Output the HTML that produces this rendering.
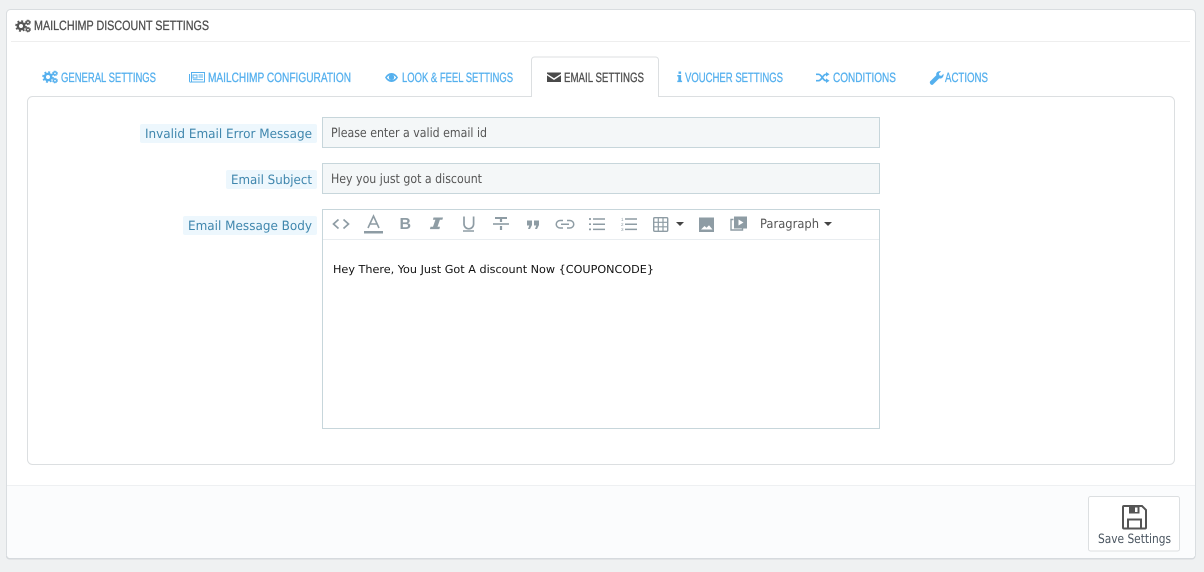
<!DOCTYPE html>
<html><head><meta charset="utf-8"><title>Mailchimp Discount Settings</title>
<style>
html,body{margin:0;padding:0;background:#eff1f2;width:1204px;height:572px;overflow:hidden}
svg{display:block;text-rendering:geometricPrecision}
.h{font-family:"Liberation Sans Narrow","Liberation Sans",sans-serif;font-size:13.5px;stroke-width:.3px}
.b{font-family:"DejaVu Sans",sans-serif;font-size:12.8px}
.tab{fill:#55b0ee;stroke:#55b0ee}
.dk{fill:#4f4f4f;stroke:#4f4f4f}
</style></head><body>
<svg width="1204" height="572" viewBox="0 0 1204 572" xmlns="http://www.w3.org/2000/svg">
<defs>
<g id="gears">
<circle cx="5" cy="6" r="3.2" fill="none" stroke="currentColor" stroke-width="2.4"/>
<circle cx="5" cy="6" r="5" fill="none" stroke="currentColor" stroke-width="1.6" stroke-dasharray="2 1.93"/>
<circle cx="12" cy="2.4" r="1.5" fill="none" stroke="currentColor" stroke-width="1.3"/>
<circle cx="12" cy="2.4" r="2.4" fill="none" stroke="currentColor" stroke-width=".8" stroke-dasharray="1.2 .7"/>
<circle cx="12" cy="9.6" r="1.5" fill="none" stroke="currentColor" stroke-width="1.3"/>
<circle cx="12" cy="9.6" r="2.4" fill="none" stroke="currentColor" stroke-width=".8" stroke-dasharray="1.2 .7"/>
</g>
</defs>
<!-- panel -->
<rect x="6.5" y="9.5" width="1189" height="549" rx="4" fill="#fff" stroke="#d9dde0"/>
<path d="M7 485.5H1195V555a3 3 0 0 1-3 3H10a3 3 0 0 1-3-3Z" fill="#fbfcfd"/>
<path d="M7 485.5H1195" stroke="#eef0f2"/>
<path d="M11 41.5H1190" stroke="#eeeeee"/>
<path d="M6.5 556a3 3 0 0 0 3 3H1192a3 3 0 0 0 3-3" fill="none" stroke="#d4d8db"/>
<!-- title -->
<use href="#gears" x="16" y="20" color="#555"/>
<text class="h dk" x="34" y="30" textLength="175" lengthAdjust="spacingAndGlyphs">MAILCHIMP DISCOUNT SETTINGS</text>
<!-- content box -->
<rect x="27.5" y="96.5" width="1147" height="368" rx="5" fill="#fff" stroke="#dcdfe1"/>
<!-- tabs -->
<path d="M531.5 97V60a3 3 0 0 1 3-3h121a3 3 0 0 1 3 3V97" fill="#fff" stroke="#dcdfe1"/>
<path d="M532 97H658" stroke="#fff" stroke-width="1.5"/>
<use href="#gears" x="43" y="71" color="#55b0ee"/>
<text class="h tab" x="61" y="82" textLength="95" lengthAdjust="spacingAndGlyphs">GENERAL SETTINGS</text>
<g fill="none" stroke="#55b0ee">
<rect x="191.5" y="72.5" width="13" height="9.5"/>
<path d="M189.5 74v7a1 1 0 0 0 1.500 1"/>
<path d="M193 75h4v3h-4zM198.500 75h4.500M198.500 77h4.500M193 79.700h10" stroke-width=".9"/>
</g>
<text class="h tab" x="208" y="82" textLength="143" lengthAdjust="spacingAndGlyphs">MAILCHIMP CONFIGURATION</text>
<path d="M385 77.500C388.500 71.500 394.500 71.500 398 77.500C394.500 83.500 388.500 83.500 385 77.500Z" fill="#55b0ee"/>
<path d="M386.800 77.500C389.500 74.200 393.500 74.200 396.200 77.500C393.500 80.800 389.500 80.800 386.800 77.500Z" fill="#fff"/>
<circle cx="391.500" cy="77.300" r="2.700" fill="#55b0ee"/>
<text class="h tab" x="402" y="82" textLength="111" lengthAdjust="spacingAndGlyphs">LOOK &amp; FEEL SETTINGS</text>
<path d="M547 72.500h14v1.200l-7 4.600-7-4.600zM547 75.400l7 4.600 7-4.600V82h-14z" fill="#4a4a4a"/>
<text class="h dk" x="564" y="82" textLength="80" lengthAdjust="spacingAndGlyphs">EMAIL SETTINGS</text>
<path d="M678.500 71.500h2.600v2.400h-2.600zM677.300 75h3.800v5.600h1v1.500h-4.800v-1.500h1v-4.100h-1z" fill="#55b0ee"/>
<text class="h tab" x="685" y="82" textLength="98" lengthAdjust="spacingAndGlyphs">VOUCHER SETTINGS</text>
<g fill="none" stroke="#55b0ee" stroke-width="1.700">
<path d="M816 74.300h2.500c3.500 0 4 6.400 7.500 6.400h1"/><path d="M816 80.700h2.500c3.500 0 4-6.400 7.500-6.400h1"/>
</g>
<path d="M826 72l3.500 2.300-3.500 2.300zM826 78.400l3.500 2.300-3.500 2.300z" fill="#55b0ee"/>
<text class="h tab" x="833" y="82" textLength="63" lengthAdjust="spacingAndGlyphs">CONDITIONS</text>
<path d="M930 81.500l6.300-6.300c-.6-2.500 1.500-4.600 4.800-4l-2.200 2.300.5 1.900 1.900.5 2.200-2.200c.5 3.300-1.700 5.300-4.300 4.700l-6.300 6.200c-1.400 1.200-3.800-1.200-2.900-3.100z" fill="#55b0ee"/>
<text class="h tab" x="945" y="82" textLength="43" lengthAdjust="spacingAndGlyphs">ACTIONS</text>
<!-- labels -->
<g fill="#edf7fd">
<rect x="140" y="124" width="177" height="19" rx="2"/>
<rect x="226" y="170" width="91" height="19" rx="2"/>
<rect x="183" y="216" width="134" height="19" rx="2"/>
</g>
<g class="b" fill="#3f86ad">
<text x="145" y="138" textLength="167" lengthAdjust="spacingAndGlyphs">Invalid Email Error Message</text>
<text x="231" y="184" textLength="81" lengthAdjust="spacingAndGlyphs">Email Subject</text>
<text x="188" y="230" textLength="124" lengthAdjust="spacingAndGlyphs">Email Message Body</text>
</g>
<!-- inputs -->
<rect x="322.500" y="117.500" width="557" height="30" fill="#f4f7f8" stroke="#c7d6db"/>
<rect x="322.500" y="163.500" width="557" height="30" fill="#f4f7f8" stroke="#c7d6db"/>
<g class="b" fill="#555">
<text x="331" y="137" textLength="156" lengthAdjust="spacingAndGlyphs">Please enter a valid email id</text>
<text x="331" y="183" textLength="151" lengthAdjust="spacingAndGlyphs">Hey you just got a discount</text>
</g>
<!-- editor -->
<rect x="322.500" y="209.500" width="557" height="219" fill="#fff" stroke="#c7d6db"/>
<path d="M323 239.500H879" stroke="#e9edf0"/>
<text x="333" y="273" font-family="'DejaVu Sans',sans-serif" font-size="11" fill="#111" textLength="321" lengthAdjust="spacingAndGlyphs">Hey There, You Just Got A discount Now {COUPONCODE}</text>
<!-- toolbar -->
<g fill="none" stroke="#8e9ca4" stroke-width="1.700">
<path d="M338.500 219.500l-5 4.500 5 4.500M343.500 219.500l5 4.500-5 4.500"/>
<path d="M368 228l5.500-12 5.500 12M370 224h7" stroke-width="1.600"/>
<path d="M464 216.500v7.500a4.800 4.800 0 0 0 9.600 0v-7.500" stroke-width="1.700"/>
<path d="M463 231h11" stroke-width="1.500"/>
<path d="M493 224h16" stroke-width="1.600"/>
<path d="M495 218h12" stroke-width="2"/>
<path d="M501 218v4M501 226v4" stroke-width="2.200"/>
<path d="M563 220.500h-3a3.600 3.600 0 0 0 0 7.500h3M567 220.500h3a3.600 3.600 0 0 1 0 7.500h-3M561 224.300h8" stroke-width="1.500"/>
<path d="M593 219h12M593 224.200h12M593 229.400h12" stroke-width="1.500"/>
<path d="M625 219h12M625 224.200h12M625 229.400h12" stroke-width="1.500"/>
<path d="M589 219h2M589 224.200h2M589 229.400h2" stroke-width="1.700"/>
<rect x="653.700" y="217.700" width="14" height="13.600" rx="1" stroke-width="1.400"/>
<path d="M658.300 218v13M663 218v13M654 222.300h14M654 226.800h14" stroke-width="1.200"/>
<path d="M733.500 219.500h-2.500v10.500h11.500v-2" stroke-width="1.400"/>
</g>
<rect x="364" y="231" width="19" height="2.500" fill="#8e9ca4"/>
<text x="399.500" y="229" font-family="'Liberation Sans',sans-serif" font-weight="700" font-size="16" fill="#8e9ca4">B</text>
<path d="M433.500 217.500h9.500l-.6 2.300h-2.500l-2.400 7h2.500l-.6 2.300h-9.500l.6-2.300h2.500l2.400-7h-2.500z" fill="#8e9ca4"/>
<path d="M527 220.500h5v4.500l-2 4h-2l1.300-3.500H527zM534 220.500h5v4.500l-2 4h-2l1.300-3.500H534z" fill="#8e9ca4"/>
<g font-family="'Liberation Sans',sans-serif" font-size="4.500" fill="#8e9ca4">
<text x="621" y="221">1</text><text x="621" y="226">2</text><text x="621" y="231">3</text>
</g>
<path d="M676 222h8l-4 4z" fill="#444"/>
<path d="M699 217.500h15v14.500h-15z" fill="#8e9ca4"/>
<path d="M701 229.500l3.500-3.500 2 1.800 2.500-2.600 3.500 4.300z" fill="#fff"/>
<path d="M734 216.500h13v12h-13z" fill="#8e9ca4"/>
<path d="M738.500 219.500l5 3-5 3z" fill="#fff"/>
<text class="b" x="760" y="228" fill="#555" textLength="59" lengthAdjust="spacingAndGlyphs">Paragraph</text>
<path d="M824 222h8l-4 4z" fill="#444"/>
<!-- save -->
<rect x="1088.500" y="496.500" width="91" height="54.500" rx="2" fill="#fff" stroke="#dcdfe1"/>
<path d="M1124 506h18l4 4v17.500a1 1 0 0 1-1 1h-21a1 1 0 0 1-1-1V507a1 1 0 0 1 1-1z" fill="none" stroke="#555" stroke-width="2"/>
<path d="M1129 506h10.500v7.500H1129z" fill="#555"/>
<path d="M1135 507.500h2.500v4.500H1135z" fill="#fff"/>
<path d="M1128 528v-8.500h13V528" fill="none" stroke="#555" stroke-width="2"/>
<text class="b" x="1098" y="543" fill="#4a5560" textLength="73" lengthAdjust="spacingAndGlyphs">Save Settings</text>
</svg>
</body></html>
